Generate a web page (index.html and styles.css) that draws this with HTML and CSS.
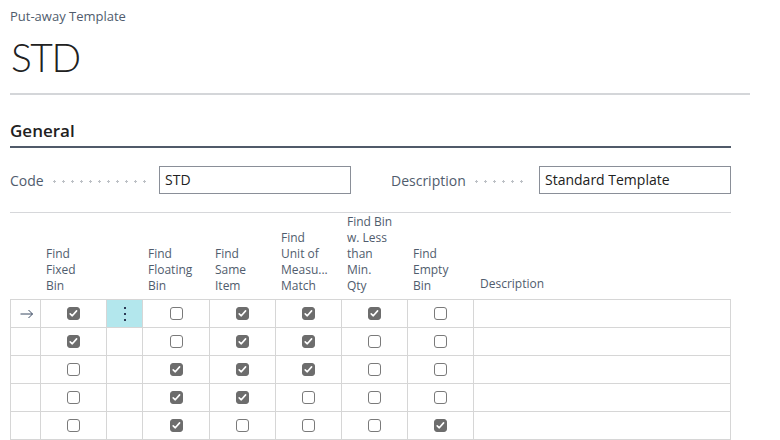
FILE: index.html
```html
<!DOCTYPE html>
<html lang="en">
<head>
<meta charset="utf-8">
<title>Put-away Template - STD</title>
<link rel="stylesheet" href="styles.css">
</head>
<body>
<div class="page">
  <header class="page-head">
    <div class="caption">Put-away Template</div>
    <h1 class="title">STD</h1>
  </header>

  <section class="section">
    <h2 class="section-title">General</h2>
    <div class="fields">
      <div class="field">
        <span class="label">Code</span>
        <span class="leader"></span>
        <div class="input">STD</div>
      </div>
      <div class="field">
        <span class="label">Description</span>
        <span class="leader"></span>
        <div class="input">Standard Template</div>
      </div>
    </div>

    <div class="lines">
      <div class="lines-head">
        <div class="th"></div>
        <div class="th">Find<br>Fixed<br>Bin</div>
        <div class="th"></div>
        <div class="th">Find<br>Floating<br>Bin</div>
        <div class="th">Find<br>Same<br>Item</div>
        <div class="th">Find<br>Unit of<br>Measu...<br>Match</div>
        <div class="th">Find Bin<br>w. Less<br>than<br>Min.<br>Qty</div>
        <div class="th">Find<br>Empty<br>Bin</div>
        <div class="th th-desc">Description</div>
      </div>
      <div class="lines-body">
        <div class="td"><svg class="arrow" width="14" height="10" viewBox="0 0 14 10"><path d="M0.5 5H12.5M8.5 1L12.5 5L8.5 9" fill="none" stroke="#3b4a63" stroke-width="1"/></svg></div>
        <div class="td"><span class="cb on"></span></div>
        <div class="td td-menu"><span class="dots"><i></i><i></i><i></i></span></div>
        <div class="td"><span class="cb"></span></div>
        <div class="td"><span class="cb on"></span></div>
        <div class="td"><span class="cb on"></span></div>
        <div class="td"><span class="cb on"></span></div>
        <div class="td"><span class="cb"></span></div>
        <div class="td"></div>

        <div class="td"></div>
        <div class="td"><span class="cb on"></span></div>
        <div class="td"></div>
        <div class="td"><span class="cb"></span></div>
        <div class="td"><span class="cb on"></span></div>
        <div class="td"><span class="cb on"></span></div>
        <div class="td"><span class="cb"></span></div>
        <div class="td"><span class="cb"></span></div>
        <div class="td"></div>

        <div class="td"></div>
        <div class="td"><span class="cb"></span></div>
        <div class="td"></div>
        <div class="td"><span class="cb on"></span></div>
        <div class="td"><span class="cb on"></span></div>
        <div class="td"><span class="cb on"></span></div>
        <div class="td"><span class="cb"></span></div>
        <div class="td"><span class="cb"></span></div>
        <div class="td"></div>

        <div class="td"></div>
        <div class="td"><span class="cb"></span></div>
        <div class="td"></div>
        <div class="td"><span class="cb on"></span></div>
        <div class="td"><span class="cb on"></span></div>
        <div class="td"><span class="cb"></span></div>
        <div class="td"><span class="cb"></span></div>
        <div class="td"><span class="cb"></span></div>
        <div class="td"></div>

        <div class="td"></div>
        <div class="td"><span class="cb"></span></div>
        <div class="td"></div>
        <div class="td"><span class="cb on"></span></div>
        <div class="td"><span class="cb"></span></div>
        <div class="td"><span class="cb"></span></div>
        <div class="td"><span class="cb"></span></div>
        <div class="td"><span class="cb on"></span></div>
        <div class="td"></div>
      </div>
    </div>
  </section>
</div>
</body>
</html>
```

FILE: styles.css
```css
* { box-sizing: border-box; }
html, body { margin: 0; padding: 0; background: #ffffff; }
body {
  font-family: "Segoe UI", "Open Sans", "Noto Sans", sans-serif;
  color: #212121;
  overflow: hidden;
}
.page { padding: 0 0 0 10px; width: 780px; }

.page-head {
  width: 740px;
  border-bottom: 2px solid #d4d6d9;
  height: 95px;
  padding-top: 7px;
}
.caption {
  font-size: 13px;
  line-height: 18px;
  color: #505c6d;
}
.title {
  margin: 10px 0 0 1px;
  font-family: "Segoe UI Light", "Lato", "Open Sans", sans-serif;
  font-size: 39px;
  font-weight: 300;
  line-height: 44px;
  letter-spacing: -1.5px;
  color: #212121;
}

.section { width: 721px; }
.section-title {
  margin: 0;
  padding-top: 23px;
  font-size: 17px;
  font-weight: 600;
  line-height: 26px;
  height: 53px;
  color: #212121;
  border-bottom: 2px solid #505a69;
}

.fields {
  display: grid;
  grid-template-columns: 341px 340px;
  column-gap: 40px;
  padding-top: 18px;
  height: 65px;
  border-bottom: 1px solid #d6d7da;
}
.field {
  display: flex;
  align-items: center;
  height: 28px;
}
.label {
  font-size: 14px;
  color: #505c6d;
  white-space: nowrap;
}
.leader {
  flex: 1;
  height: 3px;
  margin: 2px 10px 0 6px;
  background-image: radial-gradient(circle, #bcc0c5 1px, transparent 1.3px);
  background-size: 9px 3px;
  background-repeat: repeat-x;
}
.input {
  flex: 0 0 192px;
  height: 28px;
  border: 1px solid #8a8f98;
  padding: 0 5px;
  font-size: 14px;
  line-height: 26px;
  color: #212121;
}

.lines-head,
.lines-body {
  display: grid;
  grid-template-columns: 30px 66px 36px 67px 66px 66px 66px 66px 258px;
}
.lines-head {
  height: 86px;
}
.th {
  display: flex;
  align-items: flex-end;
  padding: 0 0 5px 6px;
  font-size: 12px;
  line-height: 16px;
  color: #505c6d;
}
.th-desc { padding-left: 7px; padding-bottom: 7px; }

.lines-body { width: 721px; }
.td {
  height: 28px;
  border-top: 1px solid #d6d6d6;
  border-left: 1px solid #d6d6d6;
  display: flex;
  align-items: center;
  justify-content: center;
}
.td:nth-child(9n) { border-right: 1px solid #d6d6d6; }
.td:nth-last-child(-n+9) { border-bottom: 1px solid #d6d6d6; height: 29px; }
.td-menu { background: #b3e7ed; }

.arrow { display: block; margin-left: 2px; }

.cb {
  display: block;
  width: 13px;
  height: 13px;
  border: 1px solid #7a7a7a;
  border-radius: 3px;
  background: #fff;
}
.cb.on {
  background: #6d6d6d url("data:image/svg+xml;utf8,<svg xmlns='http://www.w3.org/2000/svg' width='13' height='13' viewBox='0 0 13 13'><path d='M3.2 6.8L5.3 8.8L9.6 3.9' fill='none' stroke='white' stroke-width='1.6' stroke-linecap='round' stroke-linejoin='round'/></svg>") center/13px 13px no-repeat;
  border-color: #6d6d6d;
}

.dots {
  display: flex;
  flex-direction: column;
  gap: 4px;
  margin-left: 1px;
}
.dots i {
  display: block;
  width: 2px;
  height: 2px;
  background: #2b3a55;
}
```
